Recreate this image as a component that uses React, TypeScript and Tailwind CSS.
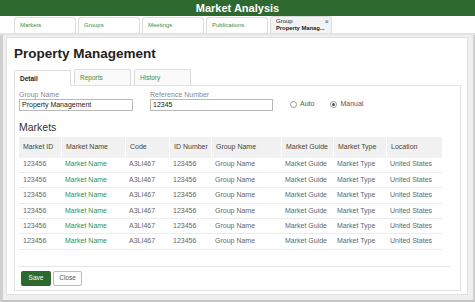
import React from "react";

const cols = [
  { h: "Market ID", w: 42, v: "123456", green: false },
  { h: "Market Name", w: 64, v: "Market Name", green: true },
  { h: "Code", w: 44, v: "A3LI467", green: false },
  { h: "ID Number", w: 42, v: "123456", green: false },
  { h: "Group Name", w: 70, v: "Group Name", green: false },
  { h: "Market Guide", w: 52, v: "Market Guide", green: false },
  { h: "Market Type", w: 53, v: "Market Type", green: false },
  { h: "Location", w: 56, v: "United States", green: false },
];

const topTabs = ["Markets", "Groups", "Meetings", "Publications"];

export default function App() {
  return (
    <div
      className="w-[475px] h-[302px] overflow-hidden bg-[#efefef] flex flex-col"
      style={{ fontFamily: '"Liberation Sans", Arial, sans-serif' }}
    >
      {/* header */}
      <div className="h-[16px] bg-[#2e6a30] flex items-center justify-center text-white font-bold text-[11px] leading-none shrink-0">
        Market Analysis
      </div>
      {/* top tabs */}
      <div className="h-[19px] bg-white border-b-[2px] border-[#e3e3e3] flex items-end pl-[14px] gap-[2px] shrink-0">
        {topTabs.map((t) => (
          <div
            key={t}
            className="w-[62px] h-[16px] border border-b-0 border-[#dcdcdc] rounded-t-[3px] text-[6px] text-[#3c8f3c] pl-[5px] flex items-center"
          >
            {t}
          </div>
        ))}
        <div className="w-[62px] h-[17px] bg-[#f3f3f3] border border-b-0 border-[#dcdcdc] rounded-t-[3px] text-[6px] text-[#222] pl-[5px] pr-[3px] flex items-start justify-between pt-[1px] leading-[7px]">
          <div className="whitespace-nowrap">
            Group
            <br />
            <span className="font-bold text-[5.8px]">Property Manag...</span>
          </div>
          <span className="text-[7px] text-[#555]">×</span>
        </div>
      </div>
      {/* body */}
      <div className="flex-1 flex border-l-[3px] border-[#cfcfcf] border-r-[2px] border-b-[2px] border-r-[#cfcfcf] border-b-[#c4c4c4] pt-[2px] pl-[3px] pr-[5px] pb-[5px]">
        <div className="flex-1 bg-white border border-[#e2e2e2] pl-[7px] pr-[6px] pt-[6px] flex flex-col">
          <div className="text-[13.5px] font-bold text-[#222] leading-none h-[20px] flex items-center">
            Property Management
          </div>
          <div className="flex gap-[3px] mt-[5px] h-[16px]">
            <div className="w-[57px] bg-white border border-b-0 border-[#dcdcdc] rounded-t-[2px] text-[6.5px] font-bold text-[#222] pl-[5px] flex items-center relative top-[1px] h-[16px] z-10">
              Detail
            </div>
            <div className="w-[57px] bg-[#fafafa] border border-b-0 border-[#dcdcdc] rounded-t-[2px] text-[6.5px] text-[#3c8f3c] pl-[5px] flex items-center">
              Reports
            </div>
            <div className="w-[57px] bg-[#fafafa] border border-b-0 border-[#dcdcdc] rounded-t-[2px] text-[6.5px] text-[#3c8f3c] pl-[5px] flex items-center">
              History
            </div>
          </div>
          <div className="flex-1 border border-[#e2e2e2] mb-[3px] pl-[4px] pr-[8px] pt-[5px] flex flex-col">
            {/* form row */}
            <div className="flex items-end">
              <div className="flex flex-col">
                <span className="text-[7px] text-[#8a8a8a] leading-[8px]">Group Name</span>
                <div className="w-[114px] h-[12px] border border-[#b9b9b9] text-[7px] text-[#222] pl-[2px] flex items-center">
                  Property Management
                </div>
              </div>
              <div className="flex flex-col ml-[17px]">
                <span className="text-[7px] text-[#8a8a8a] leading-[8px]">Reference Number</span>
                <div className="w-[123px] h-[12px] border border-[#b9b9b9] text-[7px] text-[#222] pl-[2px] flex items-center">
                  12345
                </div>
              </div>
              <div className="flex items-center ml-[17px] h-[12px] text-[7px] text-[#555] relative top-[-1px]">
                <span className="w-[7px] h-[7px] rounded-full border border-[#999] mr-[3px]" />
                Auto
                <span className="w-[7px] h-[7px] rounded-full border border-[#999] ml-[16px] mr-[3px] flex items-center justify-center">
                  <span className="w-[3px] h-[3px] rounded-full bg-[#555]" />
                </span>
                Manual
              </div>
            </div>
            <div className="text-[10.5px] text-[#333] mt-[11px] leading-none">Markets</div>
            {/* table */}
            <div className="mt-[4px] flex flex-col w-[423px]">
              <div className="flex h-[21px] bg-[#f1f1f1]">
                {cols.map((c, i) => (
                  <div
                    key={c.h}
                    className={`h-full flex items-center pl-[4px] text-[7px] text-[#444] ${i > 0 ? "border-l border-white" : ""}`}
                    style={{ width: c.w }}
                  >
                    {c.h}
                  </div>
                ))}
              </div>
              {Array.from({ length: 6 }).map((_, r) => (
                <div key={r} className="flex h-[15.4px] border-b border-[#ececec]">
                  {cols.map((c) => (
                    <div
                      key={c.h}
                      className={`h-full flex items-center pl-[4px] text-[7px] ${c.green ? "text-[#3c8f3c]" : "text-[#666]"}`}
                      style={{ width: c.w }}
                    >
                      {c.v}
                    </div>
                  ))}
                </div>
              ))}
            </div>
            <div className="mt-[16px] border-t border-[#e6e6e6] w-[432px]" />
            <div className="flex gap-[2px] mt-[4px] ml-[2px]">
              <div className="w-[30px] h-[15px] bg-[#2e6a30] rounded-[2px] text-white text-[6.5px] flex items-center justify-center">
                Save
              </div>
              <div className="w-[29px] h-[15px] bg-white border border-[#a9c7a9] rounded-[2px] text-[#555] text-[6.5px] flex items-center justify-center">
                Close
              </div>
            </div>
          </div>
        </div>
      </div>
    </div>
  );
}
